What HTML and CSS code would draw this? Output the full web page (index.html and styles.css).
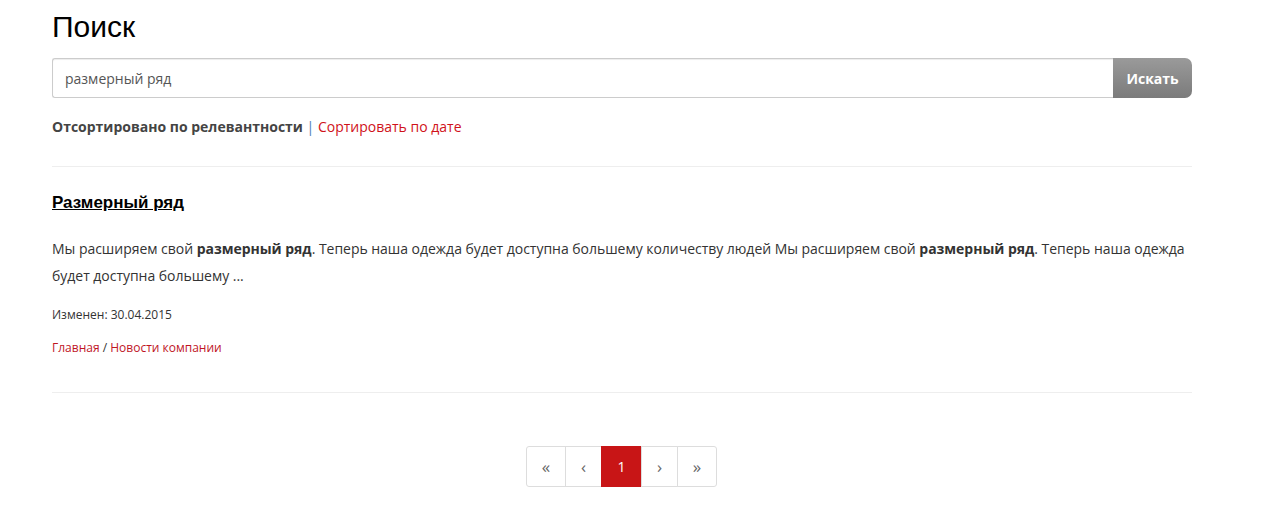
FILE: index.html
```html
<!DOCTYPE html>
<html lang="ru">
<head>
<meta charset="utf-8">
<title>Поиск</title>
<link rel="stylesheet" href="styles.css">
</head>
<body>
<div class="page">
  <h1 class="title">Поиск</h1>
  <form class="search">
    <input class="search-input" type="text" value="размерный ряд">
    <button class="search-btn" type="button">Искать</button>
  </form>
  <div class="sort">
    <b>Отсортировано по релевантности</b> <span class="sep">|</span> <a href="#" class="red">Сортировать по дате</a>
  </div>
  <hr class="rule">
  <div class="result">
    <a href="#" class="result-title">Размерный ряд</a>
    <p class="result-text">Мы расширяем свой <b>размерный ряд</b>. Теперь наша одежда будет доступна большему количеству людей Мы расширяем свой <b>размерный ряд</b>. Теперь наша одежда будет доступна большему ...</p>
    <div class="meta">Изменен: 30.04.2015</div>
    <div class="crumbs"><a href="#" class="red">Главная</a> / <a href="#" class="red">Новости компании</a></div>
  </div>
  <hr class="rule rule2">
  <div class="pager-wrap">
    <ul class="pager">
      <li class="pg pg-first">«</li>
      <li class="pg pg-prev">‹</li>
      <li class="pg pg-active">1</li>
      <li class="pg pg-next">›</li>
      <li class="pg pg-last">»</li>
    </ul>
  </div>
</div>
</body>
</html>
```
FILE: styles.css
```css
html, body { margin: 0; padding: 0; background: #fff; }
body { font-family: "Open Sans", "Liberation Sans", sans-serif; font-size: 14px; color: #333; }
.page { width: 1140px; margin-left: 52px; }
.title { font-family: "Liberation Sans", Arial, sans-serif; font-weight: normal; font-size: 30px; color: #000; margin: 0; padding-top: 9px; line-height: 36px; }
.search { display: flex; margin-top: 13px; height: 40px; }
.search-input { flex: 1; box-sizing: border-box; height: 40px; border: 1px solid #ccc; border-right: 0; border-radius: 3px 0 0 3px; padding: 0 12px; font-family: "Open Sans", sans-serif; font-size: 14px; color: #555; box-shadow: inset 0 1px 1px rgba(0,0,0,0.075); outline: none; }
.search-btn { width: 79px; height: 40px; border: 0; border-radius: 0 7px 7px 0; background: linear-gradient(#9a9a9a, #7b7b7b); color: #fff; font-family: "Open Sans", sans-serif; font-weight: bold; font-size: 14px; padding: 0; }
.sort { margin-top: 19px; line-height: 20px; }
.sort b { color: #444; }
.sep { color: #4a7ab3; }
a.red { color: #d0121a; text-decoration: none; }
.rule { border: 0; border-top: 1px solid #eee; margin: 29px 0 0; }
.result { padding-top: 25px; }
.result-title { font-family: "Liberation Sans", Arial, sans-serif; font-weight: bold; font-size: 17px; color: #000; text-decoration: underline; line-height: 22px; display: inline-block; }
.result-text { margin: 21px 0 0; line-height: 27px; color: #333; letter-spacing: -0.03px; }
.meta { font-size: 12px; margin-top: 17px; line-height: 18px; color: #333; }
.crumbs { font-size: 12px; margin-top: 15px; line-height: 18px; color: #333; }
.crumbs a.red { color: #c0151f; }
.rule2 { margin-top: 35px; }
.pager-wrap { display: flex; justify-content: center; padding-top: 53px; }
.pager { display: flex; list-style: none; margin: 0 0 0 -1px; padding: 0; }
.pg { box-sizing: border-box; height: 41px; display: flex; align-items: center; justify-content: center; border: 1px solid #ddd; margin-left: -1px; color: #666; font-size: 17px; background: #fff; }
.pg-first { width: 40px; border-radius: 3px 0 0 3px; margin-left: 0; }
.pg-prev { width: 37px; }
.pg-active { width: 41px; background: #c81516; border-color: #c81516; color: #fff; font-size: 14px; }
.pg-next { width: 37px; }
.pg-last { width: 40px; border-radius: 0 3px 3px 0; }
```
